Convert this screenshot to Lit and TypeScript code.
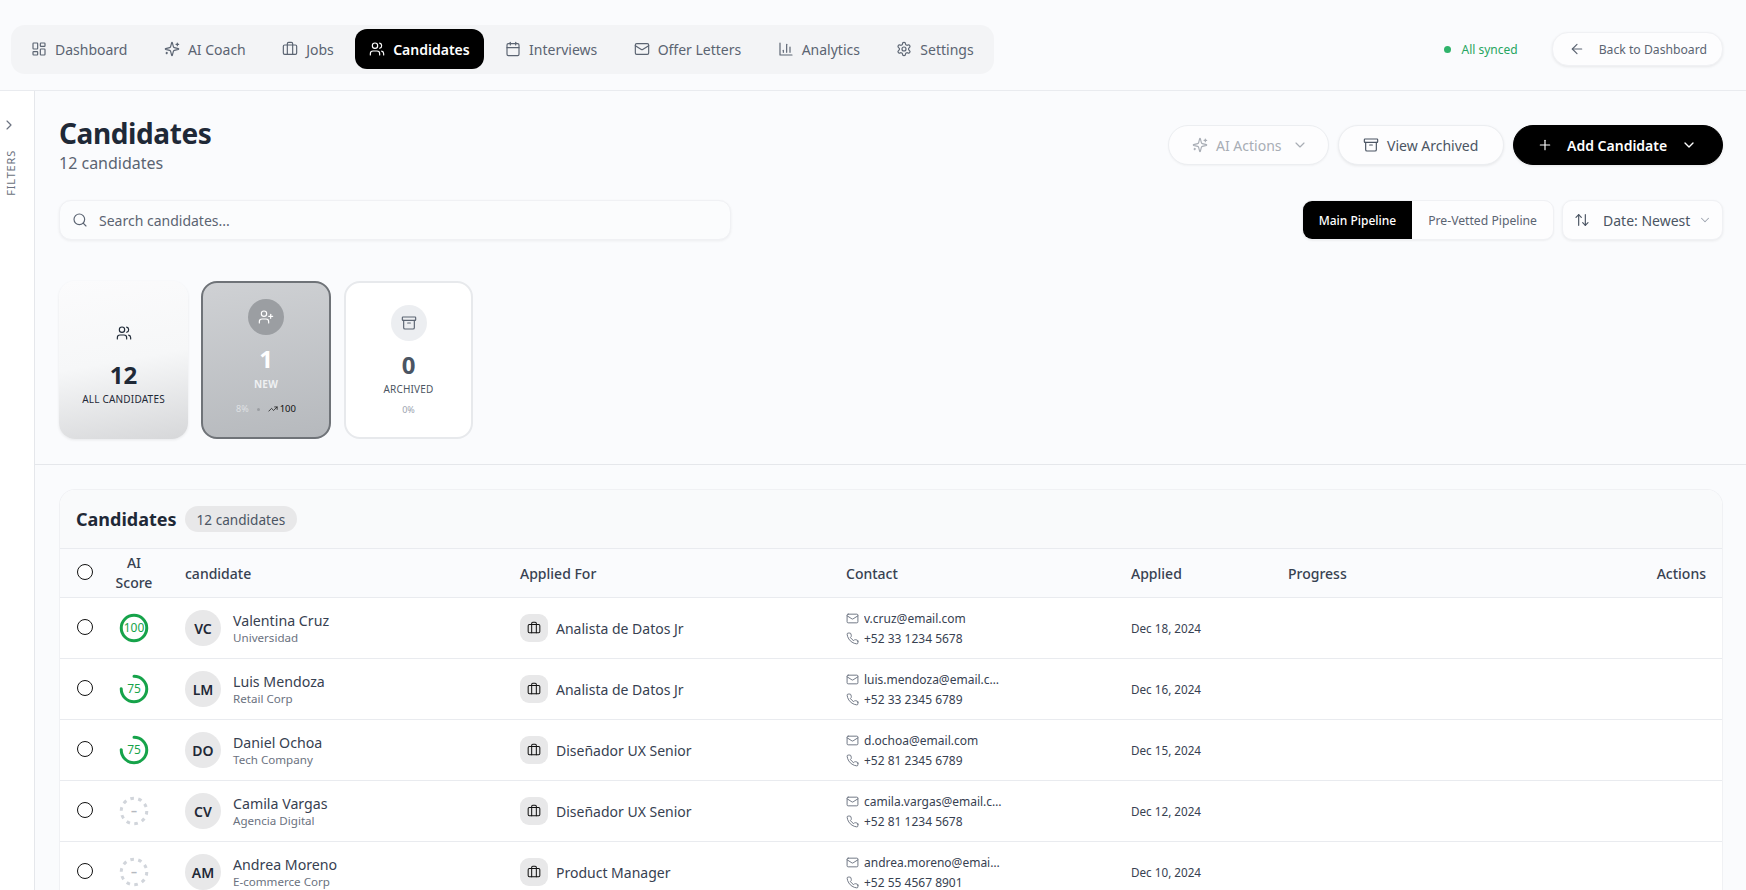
import { LitElement, html, css, svg } from 'lit';
import { customElement } from 'lit/decorators.js';

const ICONS: Record<string, unknown> = {
  dashboard: svg`<rect x="3" y="3" width="7" height="9" rx="1"/><rect x="14" y="3" width="7" height="5" rx="1"/><rect x="14" y="12" width="7" height="9" rx="1"/><rect x="3" y="16" width="7" height="5" rx="1"/>`,
  sparkles: svg`<path d="M9.94 15.5A2 2 0 0 0 8.5 14.06l-6.14-1.58a.5.5 0 0 1 0-.96L8.5 9.94A2 2 0 0 0 9.94 8.5l1.58-6.14a.5.5 0 0 1 .96 0L14.06 8.5A2 2 0 0 0 15.5 9.94l6.14 1.58a.5.5 0 0 1 0 .96L15.5 14.06a2 2 0 0 0-1.44 1.44l-1.58 6.14a.5.5 0 0 1-.96 0z"/><path d="M20 3v4"/><path d="M22 5h-4"/><path d="M4 17v2"/><path d="M5 18H3"/>`,
  briefcase: svg`<path d="M16 20V4a2 2 0 0 0-2-2h-4a2 2 0 0 0-2 2v16"/><rect x="2" y="6" width="20" height="14" rx="2"/>`,
  users: svg`<path d="M16 21v-2a4 4 0 0 0-4-4H6a4 4 0 0 0-4 4v2"/><circle cx="9" cy="7" r="4"/><path d="M22 21v-2a4 4 0 0 0-3-3.87"/><path d="M16 3.13a4 4 0 0 1 0 7.75"/>`,
  calendar: svg`<path d="M8 2v4"/><path d="M16 2v4"/><rect x="3" y="4" width="18" height="18" rx="2"/><path d="M3 10h18"/>`,
  mail: svg`<rect x="2" y="4" width="20" height="16" rx="2"/><path d="m22 7-8.97 5.7a1.94 1.94 0 0 1-2.06 0L2 7"/>`,
  chart: svg`<path d="M3 3v18h18"/><path d="M18 17V9"/><path d="M13 17V5"/><path d="M8 17v-3"/>`,
  settings: svg`<path d="M12.22 2h-.44a2 2 0 0 0-2 2v.18a2 2 0 0 1-1 1.73l-.43.25a2 2 0 0 1-2 0l-.15-.08a2 2 0 0 0-2.73.73l-.22.38a2 2 0 0 0 .73 2.73l.15.1a2 2 0 0 1 1 1.72v.51a2 2 0 0 1-1 1.74l-.15.09a2 2 0 0 0-.73 2.73l.22.38a2 2 0 0 0 2.73.73l.15-.08a2 2 0 0 1 2 0l.43.25a2 2 0 0 1 1 1.73V20a2 2 0 0 0 2 2h.44a2 2 0 0 0 2-2v-.18a2 2 0 0 1 1-1.73l.43-.25a2 2 0 0 1 2 0l.15.08a2 2 0 0 0 2.73-.73l.22-.39a2 2 0 0 0-.73-2.73l-.15-.08a2 2 0 0 1-1-1.74v-.5a2 2 0 0 1 1-1.74l.15-.09a2 2 0 0 0 .73-2.73l-.22-.38a2 2 0 0 0-2.73-.73l-.15.08a2 2 0 0 1-2 0l-.43-.25a2 2 0 0 1-1-1.73V4a2 2 0 0 0-2-2z"/><circle cx="12" cy="12" r="3"/>`,
  arrowLeft: svg`<path d="m12 19-7-7 7-7"/><path d="M19 12H5"/>`,
  plus: svg`<path d="M5 12h14"/><path d="M12 5v14"/>`,
  chevronDown: svg`<path d="m6 9 6 6 6-6"/>`,
  chevronRight: svg`<path d="m9 18 6-6-6-6"/>`,
  archive: svg`<rect x="2" y="3" width="20" height="5" rx="1"/><path d="M4 8v11a2 2 0 0 0 2 2h12a2 2 0 0 0 2-2V8"/><path d="M10 12h4"/>`,
  sort: svg`<path d="m21 16-4 4-4-4"/><path d="M17 20V4"/><path d="m3 8 4-4 4 4"/><path d="M7 4v16"/>`,
  search: svg`<circle cx="11" cy="11" r="8"/><path d="m21 21-4.3-4.3"/>`,
  userPlus: svg`<path d="M16 21v-2a4 4 0 0 0-4-4H6a4 4 0 0 0-4 4v2"/><circle cx="9" cy="7" r="4"/><path d="M19 8v6"/><path d="M22 11h-6"/>`,
  trending: svg`<path d="m22 7-8.5 8.5-5-5L2 17"/><path d="M16 7h6v6"/>`,
  phone: svg`<path d="M22 16.92v3a2 2 0 0 1-2.18 2 19.79 19.79 0 0 1-8.63-3.07 19.5 19.5 0 0 1-6-6 19.79 19.79 0 0 1-3.07-8.67A2 2 0 0 1 4.11 2h3a2 2 0 0 1 2 1.72c.13.96.36 1.9.7 2.81a2 2 0 0 1-.45 2.11L8.09 9.91a16 16 0 0 0 6 6l1.27-1.27a2 2 0 0 1 2.11-.45c.91.34 1.85.57 2.81.7A2 2 0 0 1 22 16.92z"/>`,
};

const icon = (name: string, size = 16, sw = 1.75) => html`<svg class="ic" width=${size} height=${size} viewBox="0 0 24 24" fill="none" stroke="currentColor" stroke-width=${sw} stroke-linecap="round" stroke-linejoin="round">${ICONS[name]}</svg>`;

const NAV = [
  ['dashboard', 'Dashboard'],
  ['sparkles', 'AI Coach'],
  ['briefcase', 'Jobs'],
  ['users', 'Candidates'],
  ['calendar', 'Interviews'],
  ['mail', 'Offer Letters'],
  ['chart', 'Analytics'],
  ['settings', 'Settings'],
];

const ROWS = [
  { score: 100, ini: 'VC', name: 'Valentina Cruz', co: 'Universidad', job: 'Analista de Datos Jr', mail: 'v.cruz@email.com', tel: '+52 33 1234 5678', date: 'Dec 18, 2024' },
  { score: 75, ini: 'LM', name: 'Luis Mendoza', co: 'Retail Corp', job: 'Analista de Datos Jr', mail: 'luis.mendoza@email.com', tel: '+52 33 2345 6789', date: 'Dec 16, 2024' },
  { score: 75, ini: 'DO', name: 'Daniel Ochoa', co: 'Tech Company', job: 'Diseñador UX Senior', mail: 'd.ochoa@email.com', tel: '+52 81 2345 6789', date: 'Dec 15, 2024' },
  { score: 0, ini: 'CV', name: 'Camila Vargas', co: 'Agencia Digital', job: 'Diseñador UX Senior', mail: 'camila.vargas@email.com', tel: '+52 81 1234 5678', date: 'Dec 12, 2024' },
  { score: 0, ini: 'AM', name: 'Andrea Moreno', co: 'E-commerce Corp', job: 'Product Manager', mail: 'andrea.moreno@email.com', tel: '+52 55 4567 8901', date: 'Dec 10, 2024' },
];

const ring = (score: number) => {
  const r = 12.75;
  const c = 2 * Math.PI * r;
  if (!score) {
    return html`<div class="ring none"><svg width="30" height="30" viewBox="0 0 30 30"><circle cx="15" cy="15" r=${r} fill="none" stroke="#d1d5db" stroke-width="3" stroke-dasharray="3.6 4.4"/></svg><span>–</span></div>`;
  }
  return html`<div class="ring"><svg width="30" height="30" viewBox="0 0 30 30"><circle cx="15" cy="15" r=${r} fill="none" stroke="#16a34a" stroke-width="3" stroke-linecap="round" stroke-dasharray="${(c * score) / 100} ${c}" transform="rotate(-90 15 15)"/></svg><span>${score}</span></div>`;
};

@customElement('app-root')
export class AppRoot extends LitElement {
  static styles = css`
    :host {
      display: block;
      height: 100vh;
      overflow: hidden;
      background: #fafbfd;
      color: #1f2937;
      font-family: 'Noto Sans', 'Open Sans', sans-serif;
      font-size: 14px;
    }
    .ic { flex: none; display: block; }

    .top {
      height: 91px;
      box-sizing: border-box;
      border-bottom: 1px solid #e9ebef;
      display: flex;
      align-items: center;
      justify-content: space-between;
      padding: 8px 23px 0 11px;
    }
    .nav {
      display: flex;
      align-items: center;
      height: 49px;
      box-sizing: border-box;
      padding: 0 5px;
      gap: 6.4px;
      background: #f3f4f6;
      border-radius: 14px;
    }
    .nav a {
      display: flex;
      align-items: center;
      gap: 8px;
      height: 40px;
      padding: 0 15px;
      border-radius: 12px;
      color: #5b6472;
      font-size: 14px;
    }
    .nav a.active { background: #000; color: #fff; font-weight: 600; padding: 0 14px; }
    .top-right { display: flex; align-items: center; gap: 34px; }
    .sync { display: flex; align-items: center; gap: 10px; color: #27a561; font-size: 12px; }
    .sync i { width: 7px; height: 7px; border-radius: 50%; background: #2fb36b; }
    .back {
      display: flex;
      align-items: center;
      gap: 14px;
      height: 32px;
      padding: 0 15px 0 16px;
      border-radius: 16px;
      background: #fdfdfe;
      border: 1px solid #f0f1f4;
      box-shadow: 0 1px 3px rgba(0, 0, 0, 0.08);
      color: #5b6472;
      font-size: 12.2px;
    }

    .body { display: flex; height: 799px; }
    .side {
      width: 35px;
      flex: none;
      box-sizing: border-box;
      background: #fff;
      border-right: 1px solid #e5e7eb;
      display: flex;
      flex-direction: column;
      align-items: flex-start;
      padding: 26px 0 0 1px;
      gap: 17px;
      color: #6b7280;
    }
    .side span {
      writing-mode: vertical-rl;
      transform: rotate(180deg);
      font-size: 11px;
      letter-spacing: 0.8px;
      margin-left: 2px;
    }
    .main { flex: 1; min-width: 0; }
    .head { padding: 24px 23px 0 24px; height: 374px; box-sizing: border-box; border-bottom: 1px solid #e5e7eb; }

    .title-row { display: flex; justify-content: space-between; align-items: flex-start; }
    h1 { margin: 0; font-size: 28px; line-height: 36px; font-weight: 700; letter-spacing: -0.4px; color: #1f2937; }
    .sub { font-size: 16px; line-height: 20px; color: #5b6472; margin-top: 2px; }
    .actions { display: flex; gap: 9px; margin-top: 10px; }
    .btn {
      display: flex;
      align-items: center;
      height: 40px;
      box-sizing: border-box;
      border-radius: 20px;
      background: #fdfdfe;
      border: 1px solid #eceef1;
      box-shadow: 0 1px 3px rgba(0, 0, 0, 0.08);
      color: #4b5563;
      font-size: 14px;
      white-space: nowrap;
      gap: 8px;
    }
    .btn.ai { width: 161px; padding-left: 23px; color: #a8adb5; box-shadow: 0 1px 2px rgba(0, 0, 0, 0.04); }
    .btn.ai .ic:last-child { margin-left: 2px; }
    .btn.arch { width: 166px; padding-left: 24px; }
    .btn.add { width: 210px; padding-left: 23px; background: #000; border-color: #000; color: #fff; font-weight: 600; gap: 14px; }

    .tools { display: flex; justify-content: space-between; align-items: center; margin-top: 27px; }
    .search {
      width: 672px;
      height: 40px;
      box-sizing: border-box;
      display: flex;
      align-items: center;
      gap: 11px;
      padding-left: 12px;
      background: #fbfcfd;
      border: 1px solid #f0f1f4;
      border-radius: 12px;
      box-shadow: 0 1px 3px rgba(0, 0, 0, 0.06);
      color: #5b6472;
      font-size: 14px;
    }
    .tools-right { display: flex; align-items: center; gap: 8px; }
    .seg {
      display: flex;
      height: 40px;
      box-sizing: border-box;
      border-radius: 10px;
      background: #fdfdfe;
      border: 1px solid #f0f1f4;
      box-shadow: 0 1px 2px rgba(0, 0, 0, 0.05);
      overflow: hidden;
      font-size: 12.2px;
      color: #5b6472;
    }
    .seg span { display: flex; align-items: center; padding: 0 16px; white-space: nowrap; }
    .seg .on { background: #000; color: #fff; font-weight: 500; font-size: 12px; }
    .sort {
      display: flex;
      align-items: center;
      width: 161px;
      height: 40px;
      box-sizing: border-box;
      padding-left: 11px;
      gap: 13px;
      border-radius: 10px;
      background: #fdfdfe;
      border: 1px solid #f0f1f4;
      box-shadow: 0 1px 3px rgba(0, 0, 0, 0.07);
      color: #4b5563;
      font-size: 14px;
    }
    .sort .ic:last-child { color: #9ca3af; margin-left: -5px; }

    .kpis { display: flex; gap: 13px; margin-top: 41px; }
    .kpi {
      width: 129px;
      height: 158px;
      box-sizing: border-box;
      border-radius: 16px;
      display: flex;
      flex-direction: column;
      align-items: center;
      justify-content: center;
      color: #1f2937;
    }
    .kpi.all { background: linear-gradient(170deg, #fbfbfc 0%, #f6f7f8 50%, #d6d7d9 100%); box-shadow: 0 1px 3px rgba(0, 0, 0, 0.08); }
    .kpi.new { background: linear-gradient(170deg, #cfd1d4 0%, #b6b9bd 100%); border: 2px solid #6f7378; color: #fff; width: 130px; padding-bottom: 6px; }
    .kpi.arc { background: #fff; border: 2px solid #e7e9ec; color: #4b5563; width: 129px; }
    .circle { width: 36px; height: 36px; border-radius: 50%; display: flex; align-items: center; justify-content: center; }
    .new .circle { background: #9b9ea2; color: #fff; }
    .arc .circle { background: #eceef1; color: #5b6472; }
    .num { font-size: 24px; line-height: 32px; font-weight: 700; margin-top: 8px; }
    .lab { font-size: 10px; line-height: 14px; margin-top: 1px; text-transform: uppercase; letter-spacing: 0.2px; }
    .new .lab { font-weight: 700; color: #eef0f2; margin-top: 2px; }
    .meta { display: flex; align-items: center; gap: 8px; margin-top: 12px; font-size: 9px; line-height: 12px; color: #9ca3af; }
    .arc .meta { margin-top: 8px; }
    .new .meta { color: #dfe1e4; }
    .new .meta b { font-weight: 400; color: #111; display: flex; align-items: center; gap: 2px; font-size: 9.5px; }
    .new .meta i { width: 3px; height: 3px; border-radius: 50%; background: #9b9ea2; }

    .wrap { padding: 24px 23px 0 24px; }
    .card {
      border: 1px solid #f0f1f4;
      border-bottom: 0;
      border-radius: 16px 16px 0 0;
      background: #fff;
      overflow: hidden;
    }
    .card-head {
      height: 59px;
      box-sizing: border-box;
      display: flex;
      align-items: center;
      gap: 8px;
      padding-left: 16px;
      background: #f9fafb;
      border-bottom: 1px solid #e9ebef;
    }
    .card-head h2 { margin: 0; font-size: 18px; font-weight: 700; color: #1f2937; }
    .pill { background: #e8e8e9; border-radius: 13px; height: 26px; padding: 0 12px; display: flex; align-items: center; font-size: 13.6px; color: #4b5563; }

    .row {
      display: grid;
      grid-template-columns: 49px 50px 361px 326px 285px 157px 1fr auto;
      align-items: center;
      height: 61px;
      box-sizing: border-box;
      border-bottom: 1px solid #e9ebef;
    }
    .row.th { height: 49px; background: #fafbfd; font-size: 14px; font-weight: 500; color: #374151; }
    .center { display: flex; justify-content: center; text-align: center; line-height: 20px; }
    .radio { width: 16px; height: 16px; box-sizing: border-box; border: 1px solid #111; border-radius: 50%; background: #fff; margin-top: -3px; }
    .pad { padding-left: 26px; }
    .end { padding-right: 16px; text-align: right; }

    .ring { position: relative; width: 30px; height: 30px; color: #16a34a; font-size: 12px; }
    .ring svg { display: block; }
    .ring span { position: absolute; inset: 0; display: flex; align-items: center; justify-content: center; }
    .ring.none { color: #b5b9c0; font-weight: 700; }

    .who { display: flex; align-items: center; gap: 12px; padding-left: 26px; }
    .avatar { width: 36px; height: 36px; border-radius: 50%; background: #e8e8e9; display: flex; align-items: center; justify-content: center; font-size: 14px; font-weight: 600; color: #1f2937; }
    .name { font-size: 14.2px; line-height: 18px; color: #374151; }
    .co { font-size: 11.6px; line-height: 16px; color: #6b7280; margin-top: 0; }
    .who > div:last-child { padding-top: 1px; }
    .job { display: flex; align-items: center; gap: 8px; font-size: 14px; color: #374151; }
    .job span { width: 28px; height: 28px; border-radius: 9px; background: #e8e8e9; display: flex; align-items: center; justify-content: center; color: #111; }
    .contact { font-size: 12px; line-height: 15px; color: #374151; display: grid; gap: 5px; width: 156px; }
    .contact div { display: flex; align-items: center; gap: 5px; min-width: 0; }
    .contact span { overflow: hidden; text-overflow: ellipsis; white-space: nowrap; }
    .contact .ic { color: #6b7280; }
    .date { font-size: 11.7px; color: #374151; }
  `;

  render() {
    return html`
      <header class="top">
        <nav class="nav">
          ${NAV.map(([ic, label]) => html`
            <a class=${label === 'Candidates' ? 'active' : ''}>${icon(ic, 16)}${label}</a>
          `)}
        </nav>
        <div class="top-right">
          <div class="sync"><i></i>All synced</div>
          <div class="back">${icon('arrowLeft', 16)}Back to Dashboard</div>
        </div>
      </header>
      <div class="body">
        <aside class="side">${icon('chevronRight', 16)}<span>FILTERS</span></aside>
        <div class="main">
          <section class="head">
            <div class="title-row">
              <div>
                <h1>Candidates</h1>
                <div class="sub">12 candidates</div>
              </div>
              <div class="actions">
                <div class="btn ai">${icon('sparkles', 16)}AI Actions ${icon('chevronDown', 16)}</div>
                <div class="btn arch">${icon('archive', 16)}View Archived</div>
                <div class="btn add">${icon('plus', 16)}<span>Add Candidate</span>${icon('chevronDown', 16, 2)}</div>
              </div>
            </div>
            <div class="tools">
              <div class="search">${icon('search', 16)}Search candidates...</div>
              <div class="tools-right">
                <div class="seg"><span class="on">Main Pipeline</span><span>Pre-Vetted Pipeline</span></div>
                <div class="sort">${icon('sort', 16)}Date: Newest ${icon('chevronDown', 14)}</div>
              </div>
            </div>
            <div class="kpis">
              <div class="kpi all">
                <div class="circle">${icon('users', 16)}</div>
                <div class="num">12</div>
                <div class="lab">All Candidates</div>
              </div>
              <div class="kpi new">
                <div class="circle">${icon('userPlus', 16)}</div>
                <div class="num">1</div>
                <div class="lab">New</div>
                <div class="meta">8%<i></i><b>${icon('trending', 10)}100</b></div>
              </div>
              <div class="kpi arc">
                <div class="circle">${icon('archive', 16)}</div>
                <div class="num">0</div>
                <div class="lab">Archived</div>
                <div class="meta">0%</div>
              </div>
            </div>
          </section>
          <div class="wrap">
            <div class="card">
              <div class="card-head"><h2>Candidates</h2><div class="pill">12 candidates</div></div>
              <div class="row th">
                <div class="center"><div class="radio"></div></div>
                <div class="center">AI Score</div>
                <div class="pad">candidate</div>
                <div>Applied For</div>
                <div>Contact</div>
                <div>Applied</div>
                <div>Progress</div>
                <div class="end">Actions</div>
              </div>
              ${ROWS.map((r) => html`
                <div class="row">
                  <div class="center"><div class="radio"></div></div>
                  <div class="center">${ring(r.score)}</div>
                  <div class="who">
                    <div class="avatar">${r.ini}</div>
                    <div><div class="name">${r.name}</div><div class="co">${r.co}</div></div>
                  </div>
                  <div class="job"><span>${icon('briefcase', 14)}</span>${r.job}</div>
                  <div class="contact">
                    <div>${icon('mail', 13)}<span>${r.mail}</span></div>
                    <div>${icon('phone', 13)}<span>${r.tel}</span></div>
                  </div>
                  <div class="date">${r.date}</div>
                  <div></div>
                  <div></div>
                </div>
              `)}
            </div>
          </div>
        </div>
      </div>
    `;
  }
}
